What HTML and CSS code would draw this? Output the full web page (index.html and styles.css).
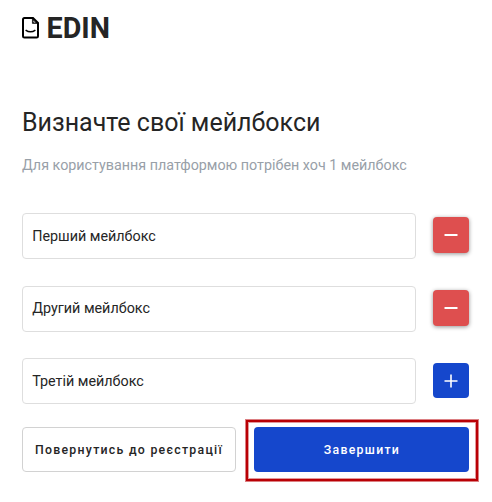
FILE: index.html
```html
<!DOCTYPE html>
<html lang="uk">
<head>
<meta charset="utf-8">
<title>EDIN</title>
<link rel="stylesheet" href="styles.css">
</head>
<body>
<main class="page">
  <header class="brand">
    <svg class="brand-icon" width="18" height="22" viewBox="0 0 18 22" fill="none" stroke="#000">
      <path d="M2.4 1.1H11L16 6V19.2Q16 20.6 14.6 20.6H2.4Q1 20.6 1 19.2V2.5Q1 1.1 2.4 1.1Z" stroke-width="2"/>
      <path d="M10.4 1.5V6.4H15.6Z" fill="#000" stroke-width=".6"/>
      <path d="M11.8 3.6V5.2H13.4" stroke="#fff" stroke-width=".8"/>
      <path d="M3.6 13.1Q8.5 16.5 13.4 13.1" stroke-width="1.5"/>
    </svg>
    <span class="brand-name">EDIN</span>
  </header>
  <h1 class="title">Визначте свої мейлбокси</h1>
  <p class="subtitle">Для користування платформою потрібен хоч 1 мейлбокс</p>
  <form class="form">
    <div class="row">
      <input class="field" type="text" value="Перший мейлбокс">
      <button class="square remove" type="button" aria-label="Видалити"><svg width="14" height="14" viewBox="0 0 14 14"><path d="M.5 7H13.5" stroke="#fff" stroke-width="2"/></svg></button>
    </div>
    <div class="row">
      <input class="field field-raised" type="text" value="Другий мейлбокс">
      <button class="square remove" type="button" aria-label="Видалити"><svg width="14" height="14" viewBox="0 0 14 14"><path d="M.5 7H13.5" stroke="#fff" stroke-width="2"/></svg></button>
    </div>
    <div class="row row-last">
      <input class="field" type="text" value="Третій мейлбокс">
      <button class="square add" type="button" aria-label="Додати"><svg width="14" height="14" viewBox="0 0 14 14"><path d="M.5 7H13.5M7 .5V13.5" stroke="#fff" stroke-width="1.6"/></svg></button>
    </div>
    <div class="actions">
      <button class="button back" type="button">Повернутись до реєстрації</button>
      <div class="finish-wrap">
        <button class="button finish" type="button">Завершити</button>
        <span class="highlight"></span>
      </div>
    </div>
  </form>
</main>
</body>
</html>
```

FILE: styles.css
```css
* { box-sizing: border-box; }
body {
  margin: 0;
  background: #fff;
  color: #252525;
  font-family: Roboto, "Liberation Sans", sans-serif;
  overflow: hidden;
}
.page { width: 492px; height: 502px; padding: 10px 23px 0 22px; }
.brand { display: flex; align-items: center; height: 36px; }
.brand-icon { flex: none; }
.brand-name {
  margin-left: 6.6px;
  font-size: 28.7px;
  font-weight: 700;
  line-height: 36px;
}
.title {
  margin: 61px 0 0;
  font-size: 25px;
  font-weight: 400;
  line-height: 32px;
  white-space: nowrap;
}
.subtitle {
  margin: 16px 0 0;
  color: #98a0a8;
  font-size: 14.32px;
  line-height: 20px;
  white-space: nowrap;
}
.form { margin-top: 38px; }
.row {
  display: flex;
  align-items: center;
  gap: 17px;
  height: 46px;
  margin-bottom: 27px;
}
.row + .row-last { margin: -1px 0 0; }
.field {
  width: 394px;
  height: 46px;
  padding: 0 9px 0 9.2px;
  border: 1px solid #dedede;
  border-radius: 4px;
  background: #fff;
  color: #252525;
  font: 400 14.35px Roboto, "Liberation Sans", sans-serif;
}
.field-raised { padding-bottom: 2px; }
.square {
  display: flex;
  align-items: center;
  justify-content: center;
  width: 36px;
  height: 36px;
  padding: 0;
  border: 0;
  border-radius: 4px;
  margin-top: -2px;
}
.remove { background: #de4f4f; box-shadow: 0 1px 4px rgba(0, 0, 0, .42); }
.add { height: 35px; margin-top: -1px; background: #1547cc; }
.actions { display: flex; gap: 18px; margin-top: 23px; }
.button {
  height: 45px;
  padding: 0;
  border-radius: 4px;
  font: 500 12.3px Roboto, "Liberation Sans", sans-serif;
  letter-spacing: 1.28px;
  white-space: nowrap;
}
.back { width: 214px; border: 1px solid #d2d2d2; background: #fff; color: #252525; }
.finish-wrap { position: relative; width: 215px; height: 45px; }
.finish { display: block; width: 215px; padding-left: 1px; border: 0; background: #1547cc; color: #fff; }
.highlight {
  position: absolute;
  inset: -7px -9px -9px -8px;
  border: 2px solid #b90005;
  box-shadow: 0 0 0 1px rgba(185, 0, 5, .5), inset 0 0 0 1px rgba(185, 0, 5, .4);
  pointer-events: none;
}
```
